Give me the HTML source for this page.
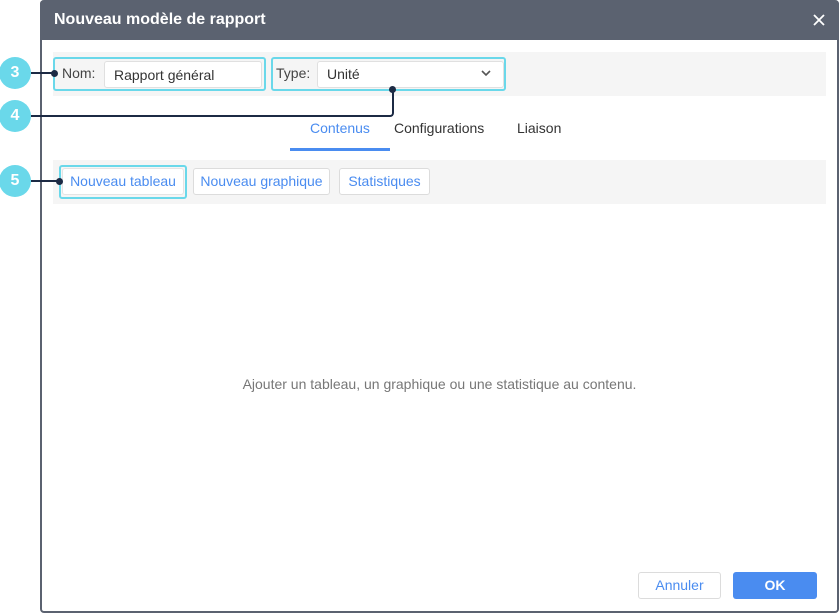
<!DOCTYPE html>
<html><head><style>
*{box-sizing:border-box;margin:0;padding:0}
body{width:839px;height:614px;background:#fff;font-family:"Liberation Sans",sans-serif;position:relative;overflow:hidden;font-size:14px}
.a{position:absolute}
.dlg{left:40px;top:0;width:799px;height:613px;border:2px solid #5b6270;border-top:none;border-radius:4px;background:#fff}
.hdr{left:40px;top:0;width:799px;height:40px;background:#5b6270;border-radius:4px 4px 0 0;color:#fff;font-size:16px;font-weight:bold;padding:11px 0 0 14px}
.gray{background:#f5f5f5}
.cy{border:2px solid #6ad8ea;border-radius:3px}
.inp{background:#fff;border:1px solid #e0e0e0;border-radius:3px}
.btn{background:#fff;border:1px solid #dcdcdc;border-radius:3px;color:#4a8cf0;font-size:14px;text-align:center;line-height:25px}
.c{width:32px;height:32px;border-radius:50%;background:#6ad8ea;color:#fff;font-weight:bold;font-size:16px;text-align:center;line-height:32px}
.ln{background:#1c2a44}
.dot{width:7px;height:7px;border-radius:50%;background:#1c2a44}
</style></head><body>
<div class="a dlg"></div>
<div class="a hdr">Nouveau modèle de rapport</div>
<svg class="a" style="left:813px;top:14px" width="12" height="12"><path d="M1 1L11 11M11 1L1 11" stroke="#fff" stroke-width="1.8"/></svg>
<div class="a gray" style="left:53px;top:52px;width:773px;height:44px"></div>
<div class="a cy" style="left:53px;top:57px;width:213px;height:34px"></div>
<div class="a" style="left:62px;top:65px;color:#444">Nom:</div>
<div class="a inp" style="left:104px;top:61px;width:158px;height:27px;padding:5px 0 0 9px;color:#333">Rapport général</div>
<div class="a cy" style="left:271px;top:57px;width:235px;height:34px"></div>
<div class="a" style="left:276px;top:65px;color:#444">Type:</div>
<div class="a inp" style="left:317px;top:61px;width:187px;height:27px;padding:4px 0 0 9px;color:#333">Unité</div>
<svg class="a" style="left:480px;top:69px" width="12" height="8"><path d="M2 2l4 4 4-4" stroke="#555" stroke-width="1.6" fill="none"/></svg>
<div class="a" style="left:310px;top:120px;color:#4a8cf0">Contenus</div>
<div class="a" style="left:394px;top:120px;color:#333">Configurations</div>
<div class="a" style="left:517px;top:120px;color:#333">Liaison</div>
<div class="a" style="left:290px;top:148px;width:100px;height:3px;background:#4a8cf0"></div>
<div class="a gray" style="left:53px;top:160px;width:773px;height:44px"></div>
<div class="a cy" style="left:59px;top:165px;width:128px;height:34px"></div>
<div class="a btn" style="left:62px;top:168px;width:122px;height:27px;border-color:#e4e4e4">Nouveau tableau</div>
<div class="a btn" style="left:193px;top:168px;width:137px;height:27px">Nouveau graphique</div>
<div class="a btn" style="left:339px;top:168px;width:91px;height:27px">Statistiques</div>
<div class="a" style="left:40px;width:799px;top:376px;text-align:center;color:#777">Ajouter un tableau, un graphique ou une statistique au contenu.</div>
<div class="a btn" style="left:638px;top:572px;width:83px;height:27px">Annuler</div>
<div class="a" style="left:733px;top:572px;width:84px;height:27px;background:#4a8cf0;border-radius:3px;color:#fff;text-align:center;line-height:27px;font-weight:bold">OK</div>
<div class="a c" style="left:-1px;top:57px">3</div>
<div class="a ln" style="left:31px;top:72px;width:22px;height:2px"></div>
<div class="a dot" style="left:51px;top:70px"></div>
<div class="a c" style="left:-1px;top:100px">4</div>
<div class="a ln" style="left:31px;top:115px;width:357px;height:2px"></div>
<div class="a" style="left:380px;top:89px;width:14px;height:28px;border-right:2px solid #1c2a44;border-bottom:2px solid #1c2a44;border-bottom-right-radius:4px"></div>
<div class="a dot" style="left:389px;top:86px"></div>
<div class="a c" style="left:-1px;top:165px">5</div>
<div class="a ln" style="left:31px;top:180px;width:28px;height:2px"></div>
<div class="a dot" style="left:56px;top:178px"></div>
</body></html>
